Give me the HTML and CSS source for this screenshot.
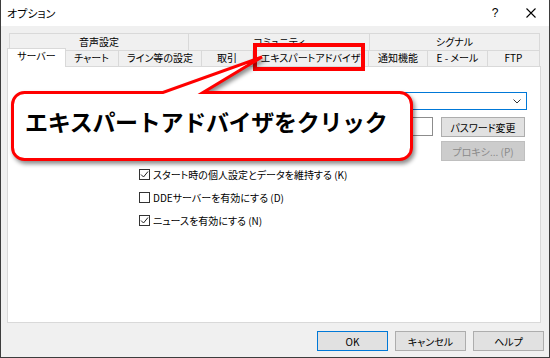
FILE: index.html
```html
<!DOCTYPE html>
<html lang="ja">
<head>
  <meta charset="UTF-8" />
  <title>オプション</title>
  <link rel="stylesheet" href="styles.css">
</head>
<body>
  <div class="window">
    <div class="titlebar">
      <span class="title">オプション</span>
      <span class="caption-btn help">?</span>
      <span class="caption-btn close">
        <svg width="10" height="10" viewBox="0 0 10 10"><path d="M0.5 0.5 L9.5 9.5 M9.5 0.5 L0.5 9.5" stroke="#000" stroke-width="1.1" fill="none"/></svg>
      </span>
    </div>

    <div class="client">
      <div class="tab-row back">
        <div class="tab tab-sound">音声設定</div>
        <div class="tab tab-community">コミュニティ</div>
        <div class="tab tab-signal">シグナル</div>
      </div>
      <div class="tab-row front">
        <div class="tab tab-server selected">サーバー</div>
        <div class="tab tab-chart">チャート</div>
        <div class="tab tab-line">ライン等の設定</div>
        <div class="tab tab-trade">取引</div>
        <div class="tab tab-expert">エキスパートアドバイザ</div>
        <div class="tab tab-notify">通知機能</div>
        <div class="tab tab-mail">E - メール</div>
        <div class="tab tab-ftp">FTP</div>
      </div>

      <div class="panel">
        <div class="combo">
          <svg width="8" height="5" viewBox="0 0 8 5"><path d="M0.5 0.5 L4 4 L7.5 0.5" stroke="#333" fill="none"/></svg>
        </div>
        <div class="login-row">
          <div class="textbox"></div>
          <button class="btn side">パスワード変更</button>
        </div>
        <div class="proxy-row">
          <button class="btn side" disabled>プロキシ... (P)</button>
        </div>
        <ul class="checks">
          <li><span class="checkbox checked"><svg width="9" height="9" viewBox="0 0 9 9"><path d="M1 4.5 L3.5 7 L8 1.5" stroke="#222" stroke-width="1" fill="none"/></svg></span>スタート時の個人設定とデータを維持する (K)</li>
          <li><span class="checkbox"></span>DDEサーバーを有効にする (D)</li>
          <li><span class="checkbox checked"><svg width="9" height="9" viewBox="0 0 9 9"><path d="M1 4.5 L3.5 7 L8 1.5" stroke="#222" stroke-width="1" fill="none"/></svg></span>ニュースを有効にする (N)</li>
        </ul>
      </div>

      <div class="actions">
        <button class="btn default">OK</button>
        <button class="btn">キャンセル</button>
        <button class="btn">ヘルプ</button>
      </div>
    </div>

    <!-- annotation on top of the dialog -->
    <div class="highlight"></div>
    <svg class="callout" width="550" height="358" viewBox="0 0 550 358">
      <path d="M24.5 92.5 H163 L262 57 L203 92.5 H399.5 A12 12 0 0 1 411.5 104.5 V147.5 A12 12 0 0 1 399.5 159.5 H24.5 A12 12 0 0 1 12.5 147.5 V104.5 A12 12 0 0 1 24.5 92.5 Z"
            fill="#fff" stroke="#ff0000" stroke-width="3" stroke-linejoin="miter" stroke-miterlimit="4"/>
    </svg>
    <div class="callout-text">エキスパートアドバイザをクリック</div>
  </div>
</body>
</html>
```

FILE: styles.css
```css
*, *::before, *::after { box-sizing: border-box; }

body {
  margin: 0;
  font-family: "Noto Sans CJK JP", "Noto Sans", sans-serif;
  font-size: 10px;
  font-feature-settings: "palt";
  color: #000;
  background: #fff;
}

.window {
  position: relative;
  width: 550px;
  height: 358px;
  background: #f0f0f0;
  border: 1px solid #3d3d3d;
  border-top: 0;
  overflow: hidden;
}

.titlebar {
  display: flex;
  align-items: center;
  height: 26px;
  background: #fff;
}

.title {
  padding-left: 6px;
  font-size: 11px;
}

.caption-btn {
  display: flex;
  align-items: center;
  justify-content: center;
  width: 36px;
  height: 26px;
}

.caption-btn.help {
  margin-left: auto;
  font-family: "Liberation Sans", sans-serif;
  font-size: 12px;
}

.client {
  padding: 7px 8px 0 6px;
}

/* tabs */
.tab-row {
  display: flex;
  margin: 0 1px 0 2px;
}

.tab-row.back { height: 17px; }
.tab-row.front { height: 16px; align-items: flex-start; }

.tab {
  height: 100%;
  border: 1px solid #d9d9d9;
  border-bottom: 0;
  border-right: 0;
  background: #f0f0f0;
  text-align: center;
  white-space: nowrap;
}

.tab-row.back .tab { line-height: 15px; }
.tab-row.front .tab { line-height: 14px; }

.tab:last-child {
  flex: 1;
  border-right: 1px solid #d9d9d9;
}

.tab.selected {
  position: relative;
  z-index: 1;
  height: 19px;
  margin: -2px -2px -1px;
  border-right: 1px solid #d9d9d9;
  background: #fff;
  line-height: 16px;
}

.tab-sound { width: 179px; }
.tab-community { width: 181px; }
.tab-server { width: 59px; }
.tab-chart { width: 54px; }
.tab-line { width: 83px; }
.tab-trade { width: 51px; }
.tab-expert { width: 116px; }
.tab-notify { width: 59px; }
.tab-mail { width: 60px; }

/* page */
.panel {
  height: 257px;
  padding: 25px 13px 0 132px;
  background: #fff;
  border: 1px solid #d9d9d9;
}

.combo {
  display: flex;
  align-items: center;
  justify-content: flex-end;
  height: 18px;
  padding-right: 5px;
  border: 1px solid #0078d7;
  background: #fff;
}

.login-row {
  display: flex;
  align-items: flex-start;
  gap: 8px;
  margin: 7px 2px 0 0;
}

.textbox {
  flex: 1;
  height: 19px;
  border: 1px solid #8c8c8c;
  background: #fff;
}

.proxy-row {
  display: flex;
  justify-content: flex-end;
  margin: 4px 2px 0 0;
}

.btn {
  height: 20px;
  padding: 0;
  font: inherit;
  color: #000;
  background: #e1e1e1;
  border: 1px solid #adadad;
}

.btn.side { width: 84px; }

.btn:disabled {
  color: #8a8a8a;
  background: #cccccc;
  border-color: #bfbfbf;
}

.btn.default { border-color: #0078d7; }

.checks {
  list-style: none;
  margin: 2px 0 0 -1px;
  padding: 0;
}

.checks li {
  display: flex;
  align-items: center;
  height: 23px;
}

.checkbox {
  display: flex;
  align-items: center;
  justify-content: center;
  width: 11px;
  height: 11px;
  margin-right: 3px;
  border: 1px solid #333;
  background: #fff;
}

.actions {
  display: flex;
  justify-content: flex-end;
  gap: 7px;
  margin: 8px -3px 0 0;
}

.actions .btn { width: 71px; }

/* annotation */
.highlight {
  position: absolute;
  left: 252px;
  top: 43px;
  width: 112px;
  height: 28px;
  border: 4px solid #ff0000;
  z-index: 2;
}

.callout {
  position: absolute;
  left: -1px;
  top: 0;
  z-index: 3;
  filter: drop-shadow(2px 3px 2px rgba(0, 0, 0, 0.45));
}

.callout-text {
  position: absolute;
  left: 24px;
  top: 106px;
  z-index: 4;
  font-size: 23px;
  font-weight: bold;
  line-height: 30px;
  letter-spacing: -0.3px;
  font-feature-settings: normal;
  white-space: nowrap;
}
```
